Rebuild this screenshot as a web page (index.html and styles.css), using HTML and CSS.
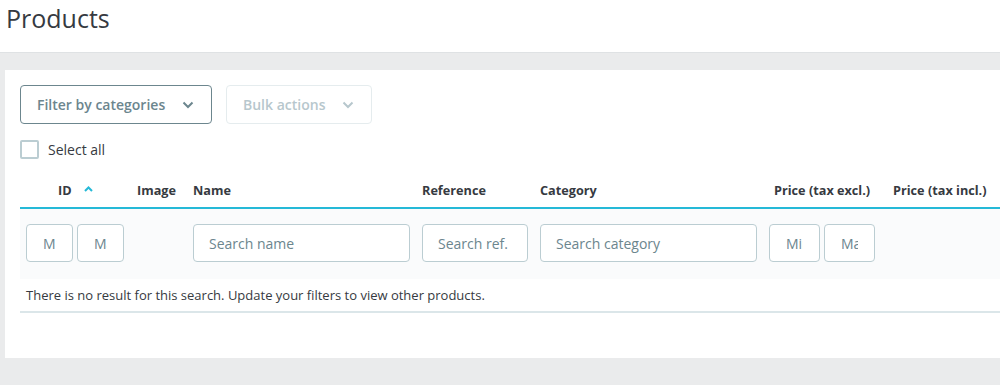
FILE: index.html
```html
<!DOCTYPE html>
<html lang="en">
<head>
    <meta charset="UTF-8">
    <meta name="viewport" content="width=device-width, initial-scale=1.0">
    <title>Products</title>
    <link rel="stylesheet" href="styles.css">
</head>
<body>

    <div class="page-head">
        <h1>Products</h1>
    </div>

    <div class="content">
        <div class="card">
            <div class="toolbar">
                <button class="btn btn-filter">
                    Filter by categories
                    <svg class="chevron" width="12" height="8" viewBox="0 0 12 8"><path d="M1.5 1.5 L6 6 L10.5 1.5" fill="none" stroke="currentColor" stroke-width="2"/></svg>
                </button>
                <button class="btn btn-bulk" disabled>
                    Bulk actions
                    <svg class="chevron" width="12" height="8" viewBox="0 0 12 8"><path d="M1.5 1.5 L6 6 L10.5 1.5" fill="none" stroke="currentColor" stroke-width="2"/></svg>
                </button>
            </div>

            <label class="select-all">
                <span class="checkbox"></span>
                Select all
            </label>

            <div class="grid head-row">
                <div class="cell cell-id">ID
                    <svg class="sort" width="9" height="6" viewBox="0 0 9 6"><path d="M1 5 L4.5 1.5 L8 5" fill="none" stroke="currentColor" stroke-width="2"/></svg>
                </div>
                <div class="cell">Image</div>
                <div class="cell">Name</div>
                <div class="cell">Reference</div>
                <div class="cell">Category</div>
                <div class="cell cell-price">Price (tax excl.)</div>
                <div class="cell">Price (tax incl.)</div>
            </div>

            <div class="grid filter-row">
                <div class="cell pair">
                    <input type="text" class="field small" placeholder="Min">
                    <input type="text" class="field small" placeholder="Max">
                </div>
                <div class="cell"></div>
                <div class="cell"><input type="text" class="field" placeholder="Search name"></div>
                <div class="cell"><input type="text" class="field" placeholder="Search ref."></div>
                <div class="cell"><input type="text" class="field" placeholder="Search category"></div>
                <div class="cell pair">
                    <input type="text" class="field price" placeholder="Min">
                    <input type="text" class="field price" placeholder="Max">
                </div>
                <div class="cell"></div>
            </div>

            <div class="empty">There is no result for this search. Update your filters to view other products.</div>
        </div>
    </div>

</body>
</html>
```

FILE: styles.css
```css
body {
    font-family: "Open Sans", "Noto Sans", sans-serif;
    color: #363a41;
    background: #eaebec;
    margin: 0;
    padding: 0;
    overflow: hidden;
}

.page-head {
    background: #fff;
    height: 53px;
    border-bottom: 1px solid #dfe2e4;
    box-sizing: border-box;
}

h1 {
    font-size: 25px;
    font-weight: 400;
    margin: 0;
    padding: 1px 0 0 6px;
    line-height: 34px;
}

.content {
    padding: 17px 0 0 5px;
}

.card {
    background: #fff;
    width: 1010px;
    padding: 15px 0 45px 15px;
    box-sizing: border-box;
}

.toolbar {
    display: flex;
    gap: 14px;
}

.btn {
    display: flex;
    align-items: center;
    justify-content: space-between;
    height: 39px;
    padding: 0 16px;
    font-family: inherit;
    font-size: 14px;
    font-weight: 600;
    background: #fff;
    border-radius: 4px;
    box-sizing: border-box;
}

.btn-filter {
    width: 192px;
    color: #6c868e;
    border: 1px solid #6c868e;
}

.btn-bulk {
    width: 146px;
    color: #b7c7cd;
    border: 1px solid #e5ecee;
}

.chevron {
    margin-right: 1px;
}

.select-all {
    display: flex;
    align-items: center;
    gap: 9px;
    margin-top: 15px;
    padding-top: 1px;
    font-size: 14px;
    height: 19px;
}

.checkbox {
    width: 19px;
    height: 19px;
    border: 2px solid #bbcdd2;
    border-radius: 2px;
    box-sizing: border-box;
}

.grid {
    display: grid;
    grid-template-columns: 111px 56px 229px 118px 229px 124px 1fr;
}

.cell {
    padding: 0 6px;
    display: flex;
    align-items: center;
}

.head-row {
    margin-top: 12px;
    height: 38px;
    padding-top: 2px;
    font-size: 12.7px;
    font-weight: 700;
    border-bottom: 2px solid #25b9d7;
    box-sizing: border-box;
}

.cell-id {
    padding-left: 38px;
}

.sort {
    color: #25b9d7;
    margin-left: 12px;
    margin-top: -3px;
}

.cell-price {
    padding-left: 11px;
}

.filter-row {
    background: #fafbfc;
    padding: 15px 0 17px;
}

.pair {
    gap: 4px;
}

.field {
    width: 100%;
    height: 38px;
    border: 1px solid #bbcdd2;
    border-radius: 4px;
    padding: 0 15px;
    font-family: inherit;
    font-size: 14px;
    color: #363a41;
    background: #fff;
    box-sizing: border-box;
}

.field::placeholder {
    color: #6c868e;
}

.field.small {
    width: 47px;
    padding: 0 16px;
}

.field.price {
    width: 51px;
    padding: 0 16px;
}

.empty {
    font-size: 13px;
    padding: 0 6px;
    height: 32px;
    line-height: 32px;
    border-bottom: 2px solid #dbe6e9;
}
```
